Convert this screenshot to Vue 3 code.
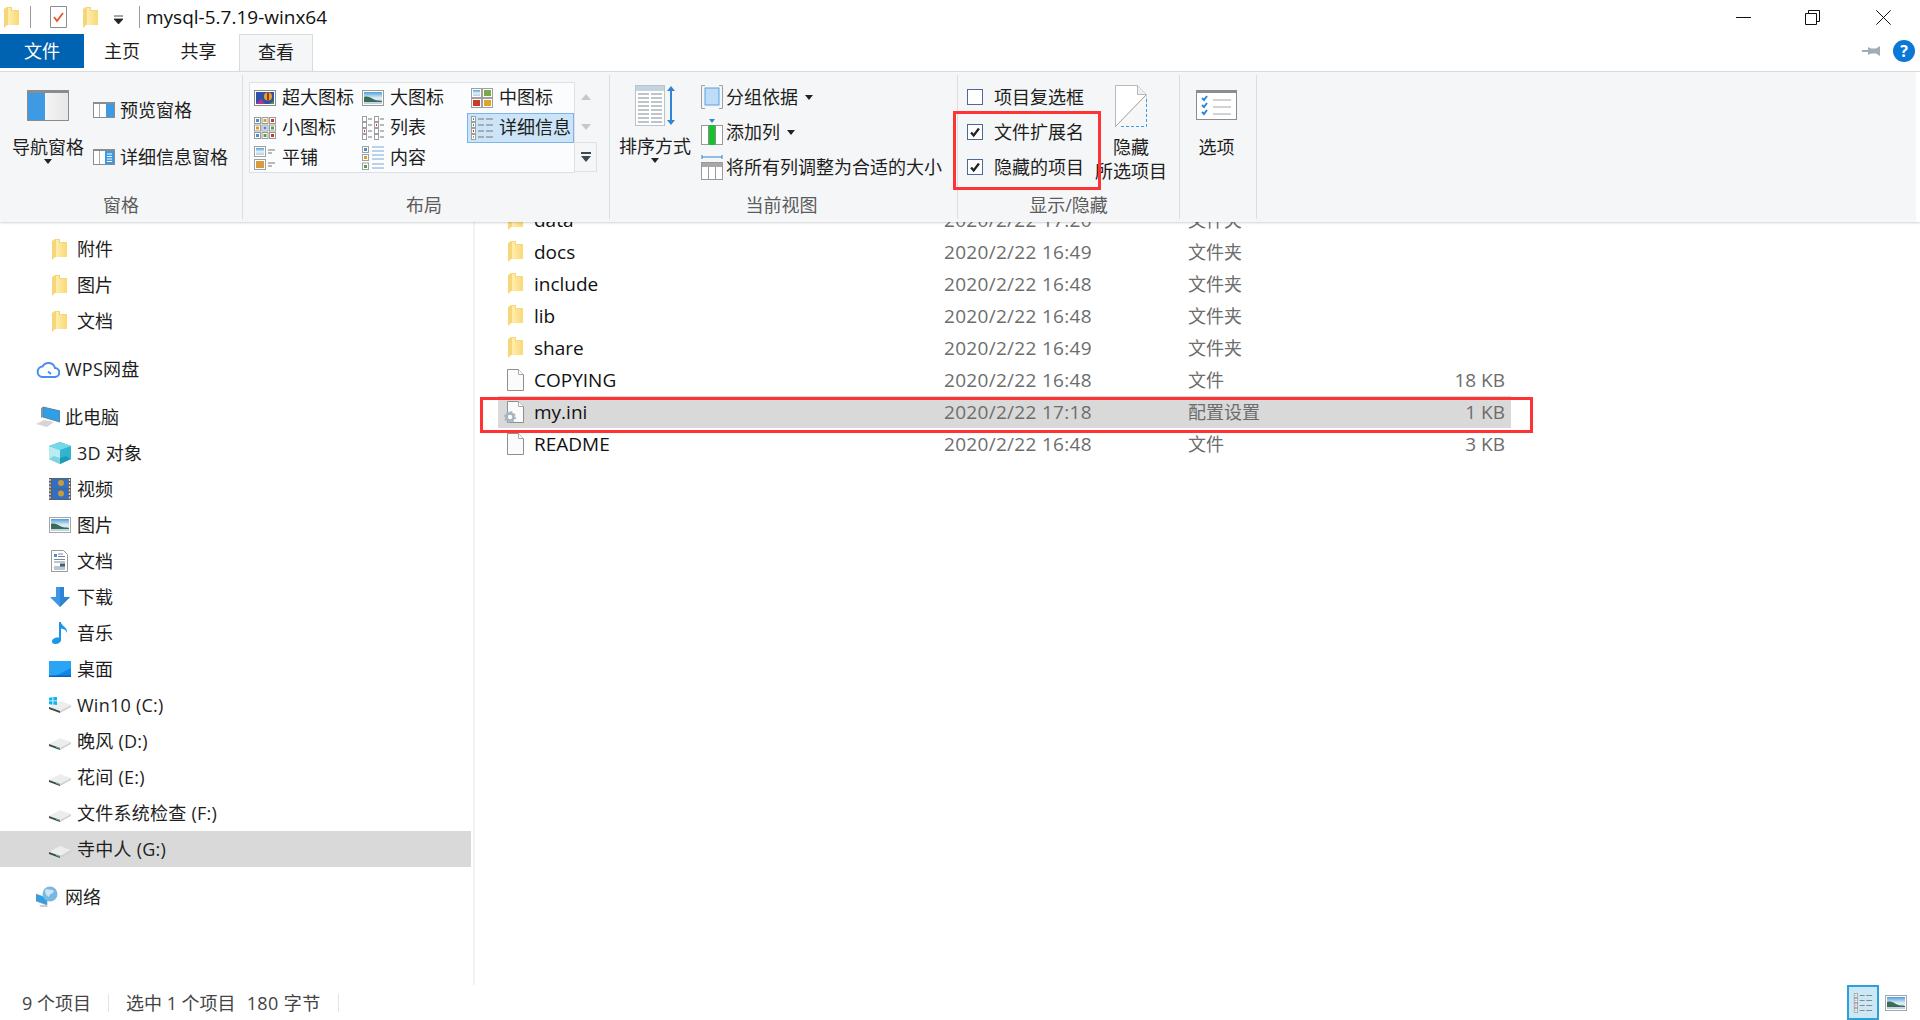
<script setup>
const nav = [
  { icon: 'folder', label: '附件', deep: true, cls: 'folder-ic' },
  { icon: 'folder', label: '图片', deep: true, cls: 'folder-ic' },
  { icon: 'folder', label: '文档', deep: true, cls: 'folder-ic' },
  { gap: true },
  { icon: 'cloud', label: 'WPS网盘', wide: true },
  { gap: true },
  { icon: 'pc', label: '此电脑' },
  { icon: 'cube', label: '3D 对象', deep: true, wide: true },
  { icon: 'film', label: '视频', deep: true },
  { icon: 'photo', label: '图片', deep: true },
  { icon: 'docs', label: '文档', deep: true },
  { icon: 'down', label: '下载', deep: true },
  { icon: 'note', label: '音乐', deep: true },
  { icon: 'desk', label: '桌面', deep: true },
  { icon: 'winDrive', label: 'Win10 (C:)', deep: true, wide: true },
  { icon: 'drive', label: '晚风 (D:)', deep: true, wide: true },
  { icon: 'drive', label: '花间 (E:)', deep: true, wide: true },
  { icon: 'drive', label: '文件系统检查 (F:)', deep: true, wide: true },
  { icon: 'drive', label: '寺中人 (G:)', deep: true, active: true, wide: true },
  { gap: true },
  { icon: 'net', label: '网络' }
]

const files = [
  { name: 'data', date: '2020/2/22 17:20', type: '文件夹', icon: 'folder' },
  { name: 'docs', date: '2020/2/22 16:49', type: '文件夹', icon: 'folder' },
  { name: 'include', date: '2020/2/22 16:48', type: '文件夹', icon: 'folder' },
  { name: 'lib', date: '2020/2/22 16:48', type: '文件夹', icon: 'folder' },
  { name: 'share', date: '2020/2/22 16:49', type: '文件夹', icon: 'folder' },
  { name: 'COPYING', date: '2020/2/22 16:48', type: '文件', size: '18 KB', icon: 'file' },
  { name: 'my.ini', date: '2020/2/22 17:18', type: '配置设置', size: '1 KB', icon: 'ini', active: true },
  { name: 'README', date: '2020/2/22 16:48', type: '文件', size: '3 KB', icon: 'file' }
]

const layouts = [
  { icon: 'gXl', label: '超大图标' },
  { icon: 'gLg', label: '大图标' },
  { icon: 'gMd', label: '中图标' },
  { icon: 'gSm', label: '小图标' },
  { icon: 'gList', label: '列表' },
  { icon: 'gDetail', label: '详细信息', active: true },
  { icon: 'gTile', label: '平铺' },
  { icon: 'gContent', label: '内容' }
]
</script>

<template>
  <div class="window">
    <!-- icon sheet -->
    <svg class="sheet" aria-hidden="true">
      <defs>
        <linearGradient id="sky" x1="0" y1="0" x2="0" y2="1">
          <stop offset="0" stop-color="#4f9fdc" />
          <stop offset="0.5" stop-color="#dfeef5" />
          <stop offset="1" stop-color="#b9d0dd" />
        </linearGradient>
        <linearGradient id="fold" x1="0" y1="0" x2="1" y2="0">
          <stop offset="0" stop-color="#fdeeb0" />
          <stop offset="1" stop-color="#fbd873" />
        </linearGradient>
        <linearGradient id="paneG" x1="0" y1="0" x2="1" y2="0">
          <stop offset="0" stop-color="#ffffff" />
          <stop offset="1" stop-color="#e6e6e6" />
        </linearGradient>
        <linearGradient id="deskG" x1="0" y1="0" x2="1" y2="1">
          <stop offset="0" stop-color="#1aa0f5" />
          <stop offset="1" stop-color="#0f7fe0" />
        </linearGradient>
      </defs>

      <symbol id="folder" viewBox="0 0 15 21">
        <path d="M0 2 3 0h5v3h7v15H3l-3 3z" fill="#f6d679" />
        <path d="M4 1h3v3h8v14H4z" fill="url(#fold)" />
      </symbol>
      <symbol id="file" viewBox="0 0 17 22">
        <path d="M.5.5h11l5 5v16H.5z" fill="#fbfbfb" stroke="#8e8e8e" />
        <path d="M11.5.5v5h5" fill="#fff" stroke="#a8a8a8" />
      </symbol>
      <symbol id="gear" viewBox="0 0 12 12">
        <circle cx="6" cy="6" r="3.6" fill="none" stroke="#a3b4c0" stroke-width="2.6" />
        <circle cx="6" cy="6" r="5.4" fill="none" stroke="#a3b4c0" stroke-width="1.3" stroke-dasharray="2 2.2" />
      </symbol>
      <symbol id="cloud" viewBox="0 0 24 18">
        <path d="M6 17h12.500a4.500 4.500 0 0 0 .5-9A6.800 6.800 0 0 0 6.500 6.500 5.300 5.300 0 0 0 6 17z" fill="none" stroke="#4a8df0" stroke-width="2" />
        <path d="M12 11.500 15 14" stroke="#4a8df0" stroke-width="2" />
      </symbol>
      <symbol id="pc" viewBox="0 0 24 22">
        <path d="M7 1 24 5v11L7 11z" fill="#2f9fe8" stroke="#5f7f96" />
        <path d="M5 2v10l2-1V1z" fill="#7a97ab" />
        <path d="M0 18l8-4 10 2-7 5z" fill="#d4d6d8" />
      </symbol>
      <symbol id="cube" viewBox="0 0 22 22">
        <path d="M11 0 22 4v13l-11 5L0 17V4z" fill="#31b5cf" />
        <path d="M0 4l11 4v14L0 17z" fill="#b9ecf2" />
        <path d="M11 0 22 4 11 8 0 4z" fill="#74d8e6" />
        <path d="M11 16v6L0 17l5-3z" fill="#7fd3df" />
        <path d="M11 16v6l11-5-5-3z" fill="#1e9ab5" />
      </symbol>
      <symbol id="film" viewBox="0 0 22 22">
        <rect width="22" height="22" fill="#5b5f66" />
        <rect x="3" y="1" width="16" height="9.500" fill="#2f70c4" />
        <rect x="3" y="11.500" width="16" height="9.500" fill="#2f70c4" />
        <circle cx="12" cy="5" r="3" fill="#c89a3a" />
        <circle cx="12" cy="15.500" r="3" fill="#c89a3a" />
        <path d="M1 1v20" stroke="#d8d8d8" stroke-width="1.400" stroke-dasharray="2 1.500" />
        <path d="M20.500 1v20" stroke="#d8d8d8" stroke-width="1.400" stroke-dasharray="2 1.500" />
      </symbol>
      <symbol id="photo" viewBox="0 0 22 16">
        <rect x=".5" y=".5" width="21" height="15" fill="#fff" stroke="#a6a6a6" />
        <rect x="2" y="2" width="18" height="12" fill="url(#sky)" />
        <path d="M2 7c3-1 6 0 9 2s6 1 9 2v1H2z" fill="#3c6a55" />
      </symbol>
      <symbol id="docs" viewBox="0 0 17 22">
        <path d="M.5.5h12l4 4v17H.5z" fill="#fff" stroke="#9a9a9a" />
        <path d="M3 4h3v3H3z" fill="#4a90d8" />
        <path d="M7 4h5M7 6.500h7M3 9.500h11M3 12h11M3 17h11M3 19h11" stroke="#7a8a98" />
        <rect x="9" y="13.500" width="5" height="3" fill="#3c5f7a" />
      </symbol>
      <symbol id="down" viewBox="0 0 20 20">
        <path d="M6 0h8v10h6l-10 10L0 10h6z" fill="#3d97e6" />
        <path d="M10 0h4v10h6L10 20z" fill="#2f83d3" />
      </symbol>
      <symbol id="note" viewBox="0 0 16 22">
        <path d="M7 0h2c0 4 7 5 6 11-1-3-3-4-6-4.500V18c0 2.500-3 4-6 4-2 0-3-1-3-2.500C0 17 3 15 7 15.500z" fill="#1c96e8" />
      </symbol>
      <symbol id="desk" viewBox="0 0 22 16">
        <rect width="22" height="16" fill="url(#deskG)" />
        <path d="M22 0v7L6 15H0V0z" fill="#2aa5f5" />
        <path d="M0 14.500h22V16H0z" fill="#0b5fb8" />
      </symbol>
      <symbol id="drive" viewBox="0 0 22 12">
        <path d="M0 6 11 0l11 4-11 6z" fill="#eceded" />
        <path d="M0 6l11 4v2L0 8z" fill="#3d4a45" />
        <path d="M11 10l11-6v2l-11 6z" fill="#cfd0d1" />
        <path d="M7 8.500l4 1.500v1l-4-1.500z" fill="#57c26a" />
      </symbol>
      <symbol id="winDrive" viewBox="0 0 22 16">
        <path d="M0 10 11 4l11 4-11 6z" fill="#eceded" />
        <path d="M0 10l11 4v2L0 12z" fill="#3d4a45" />
        <path d="M11 14l11-6v2l-11 6z" fill="#cfd0d1" />
        <path d="M0 .8 3.500.2v3.300H0zM4.300.1 8 0v3.500H4.300zM0 4.300h3.500v3.400L0 7.200zM4.300 4.300H8V8l-3.700-.4z" fill="#10b4ee" />
      </symbol>
      <symbol id="net" viewBox="0 0 22 22">
        <path d="M0 8l11 4v7L0 15z" fill="#2f9fe8" stroke="#7c93a5" stroke-width=".6" />
        <circle cx="14" cy="8" r="7.500" fill="#78b8e6" />
        <path d="M10 3c3 1 6 0 8 2-1 3-5 3-5 6-3-1-5-5-3-8z" fill="#cfe4f2" />
        <path d="M3 19l8 0 1 2H5z" fill="#c7cdd2" />
      </symbol>

      <symbol id="paneNav" viewBox="0 0 42 31">
        <rect x=".5" y=".5" width="41" height="30" fill="url(#paneG)" stroke="#8c8c8c" />
        <rect width="42" height="3" fill="#8c8c8c" />
        <rect x="1" y="3" width="17" height="27" fill="#3f9ae4" />
      </symbol>
      <symbol id="panePreview" viewBox="0 0 22 16">
        <rect x=".5" y=".5" width="21" height="15" fill="#fff" stroke="#8c8c8c" />
        <rect width="22" height="2" fill="#8c8c8c" />
        <rect x="13" y="2" width="8" height="13" fill="#3f9ae4" />
        <rect x="6" y="2" width="1" height="13" fill="#aaa" />
      </symbol>
      <symbol id="paneDetail" viewBox="0 0 22 16">
        <rect x=".5" y=".5" width="21" height="15" fill="#fff" stroke="#8c8c8c" />
        <rect width="22" height="2" fill="#8c8c8c" />
        <rect x="12" y="2" width="9" height="13" fill="#3f9ae4" />
        <path d="M14 5h5M14 7.500h5M14 10h5M14 12.500h5" stroke="#fff" />
        <rect x="6" y="2" width="1" height="13" fill="#aaa" />
      </symbol>

      <symbol id="gXl" viewBox="0 0 22 18">
        <rect x=".5" y="1.500" width="21" height="15" fill="#fff" stroke="#8c8c8c" />
        <rect x="2" y="3" width="18" height="12" fill="#2f52a8" />
        <path d="M2 15l5-5 4 5z" fill="#b8378e" />
        <circle cx="14" cy="7.500" r="4" fill="#e8a324" />
        <path d="M14 3.500v8" stroke="#a8341c" stroke-width="2" />
        <path d="M15 15l5-3v3z" fill="#4d9b3b" />
      </symbol>
      <symbol id="gLg" viewBox="0 0 22 18">
        <rect x=".5" y="1.500" width="21" height="15" fill="#fff" stroke="#9a9a9a" />
        <rect x="2" y="3" width="18" height="12" fill="url(#sky)" />
        <path d="M2 8c3-1 6 0 9 2s6 1 9 2v1H2z" fill="#3c6a55" />
      </symbol>
      <symbol id="gMd" viewBox="0 0 22 20">
        <rect x=".5" y=".5" width="10" height="9" fill="#fff" stroke="#a0a0a0" />
        <rect x="11.500" y=".5" width="10" height="9" fill="#fff" stroke="#a0a0a0" />
        <rect x=".5" y="10.500" width="10" height="9" fill="#fff" stroke="#a0a0a0" />
        <rect x="11.500" y="10.500" width="10" height="9" fill="#fff" stroke="#a0a0a0" />
        <rect x="2" y="2" width="7" height="6" fill="url(#sky)" />
        <rect x="13" y="2" width="7" height="6" fill="#7aa84a" />
        <rect x="2" y="12" width="7" height="6" fill="#c83a2a" />
        <rect x="13" y="12" width="7" height="6" fill="#dfa62a" />
      </symbol>
      <symbol id="gSm" viewBox="0 0 22 22">
        <g fill="#fff" stroke="#9a9a9a">
          <rect x=".5" y=".5" width="6" height="6" /><rect x="8" y=".5" width="6" height="6" /><rect x="15.500" y=".5" width="6" height="6" />
          <rect x=".5" y="8" width="6" height="6" /><rect x="8" y="8" width="6" height="6" /><rect x="15.500" y="8" width="6" height="6" />
          <rect x=".5" y="15.500" width="6" height="6" /><rect x="8" y="15.500" width="6" height="6" /><rect x="15.500" y="15.500" width="6" height="6" />
        </g>
        <path d="M2 2h3v3H2zM2 17h3v3H2zM9.500 9.500h3v3h-3z" fill="#4a90c8" />
        <path d="M9.500 2h3v3h-3zM2 9.500h3v3H2z" fill="#d8a02a" />
        <path d="M17 2h3v3h-3zM17 17h3v3h-3z" fill="#c83a2a" />
        <path d="M17 9.500h3v3h-3zM9.500 17h3v3h-3z" fill="#5d9c45" />
      </symbol>
      <symbol id="gList" viewBox="0 0 22 24">
        <g fill="#fff" stroke="#a0a0a0">
          <rect x=".5" y=".5" width="4" height="5" /><rect x=".5" y="6.500" width="4" height="5" /><rect x=".5" y="12.500" width="4" height="5" /><rect x=".5" y="18.500" width="4" height="5" />
          <rect x="12.500" y=".5" width="4" height="5" /><rect x="12.500" y="6.500" width="4" height="5" /><rect x="12.500" y="12.500" width="4" height="5" /><rect x="12.500" y="18.500" width="4" height="5" />
        </g>
        <path d="M6 3h4M6 9h4M6 15h4M6 21h4M18 3h4M18 9h4M18 15h4M18 21h4" stroke="#777" />
        <path d="M2 14h1v2H2zM14 8h1v2h-1z" fill="#c83a2a" />
      </symbol>
      <symbol id="gDetail" viewBox="0 0 22 24">
        <g fill="#fff" stroke="#a0a0a0">
          <rect x=".5" y=".5" width="4" height="5" /><rect x=".5" y="6.500" width="4" height="5" /><rect x=".5" y="12.500" width="4" height="5" /><rect x=".5" y="18.500" width="4" height="5" />
        </g>
        <path d="M7 3h6M15 3h7M7 9h6M15 9h7M7 15h6M15 15h7M7 21h6M15 21h7" stroke="#777" />
        <path d="M2 2h1v2H2z" fill="#4a90c8" /><path d="M2 8h1v2H2z" fill="#7a8a2a" /><path d="M2 14h1v2H2z" fill="#c83a2a" /><path d="M2 20h1v2H2z" fill="#8aa86a" />
      </symbol>
      <symbol id="gTile" viewBox="0 0 22 24">
        <rect x=".5" y=".5" width="11" height="10" fill="#fff" stroke="#a0a0a0" />
        <rect x=".5" y="13.500" width="11" height="10" fill="#fff" stroke="#a0a0a0" />
        <rect x="2" y="2" width="8" height="7" fill="url(#sky)" />
        <rect x="2" y="15" width="8" height="7" fill="#d89a3a" />
        <path d="M14 4h7M14 7h4M14 17h7M14 20h4" stroke="#777" />
      </symbol>
      <symbol id="gContent" viewBox="0 0 22 24">
        <rect x=".5" y=".5" width="6" height="6" fill="#fff" stroke="#a0a0a0" />
        <rect x=".5" y="8.500" width="6" height="6" fill="#fff" stroke="#a0a0a0" />
        <rect x=".5" y="17" width="6" height="6.500" fill="#fff" stroke="#a0a0a0" />
        <path d="M2 2h3v3H2z" fill="#4a90c8" /><path d="M2 10h3v3H2z" fill="#d8a02a" /><path d="M2 19h3v3H2z" fill="#5d9c45" />
        <path d="M10 1h12M10 5h12M10 9h12M10 13h12M10 18h12M10 22h12" stroke="#7aa6dc" />
      </symbol>

      <symbol id="sortBig" viewBox="0 0 40 41">
        <rect x=".5" y=".5" width="29" height="40" fill="#fff" stroke="#b8c4cc" />
        <rect x="1" y="1" width="28" height="5" fill="#c3d4df" />
        <path d="M3 9h11M16 9h11M3 13h11M16 13h11M3 17h11M16 17h11M3 21h11M16 21h11M3 25h11M16 25h11M3 29h11M16 29h11M3 33h11M16 33h11M3 37h11M16 37h11" stroke="#a9b2b8" stroke-width="1.600" />
        <path d="M36 1l4 5h-3v29h3l-4 5-4-5h3V6h-3z" fill="#2f86d2" />
      </symbol>
      <symbol id="groupBy" viewBox="0 0 22 24">
        <path d="M4 .5H.5v23H4M18 .5h3.500v23H18" fill="none" stroke="#9aa0a6" />
        <rect x="4" y="3" width="14" height="17" fill="#bcdcf7" stroke="#5ea3dc" />
      </symbol>
      <symbol id="addCol" viewBox="0 0 22 26">
        <path d="M8 0h6l-3 4z" fill="#2f86d2" />
        <rect x=".5" y="6.500" width="21" height="19" fill="#fff" stroke="#9a9a9a" />
        <rect x="8" y="6" width="6" height="20" fill="#17c32c" />
        <path d="M7.500 7v18M14.500 7v18" stroke="#8c8c8c" />
      </symbol>
      <symbol id="fitCol" viewBox="0 0 22 26">
        <path d="M1 3h20M1 1v4M21 1v4" stroke="#2f86d2" fill="none" />
        <rect x=".5" y="8.500" width="21" height="17" fill="#fff" stroke="#9a9a9a" />
        <rect x="1" y="9" width="20" height="4" fill="#a8a8a8" />
        <path d="M7.500 13v12M14.500 13v12" stroke="#9a9a9a" />
      </symbol>
      <symbol id="hideBig" viewBox="0 0 32 42">
        <path d="M.5 41.500V.5h22l9 9v10" fill="#fff" stroke="#b9b9b9" />
        <path d="M22.500.5v9h9" fill="#eee" stroke="#b9b9b9" />
        <path d="M.5 41.500 31.500 9.500v10L13 41.500z" fill="#f7f7f7" />
        <path d="M.5 41.500 31 10" stroke="#9c9c9c" fill="none" />
        <path d="M31.500 14v27.500H6" fill="none" stroke="#3f9ae4" stroke-dasharray="3 2" />
      </symbol>
      <symbol id="optBig" viewBox="0 0 41 30">
        <rect x=".5" y=".5" width="40" height="29" fill="#fff" stroke="#8c8c8c" />
        <rect width="41" height="3" fill="#8c8c8c" />
        <path d="M6 8l2 2 3-4M6 15l2 2 3-4M6 22l2 2 3-4" fill="none" stroke="#2f86d2" stroke-width="2" />
        <path d="M17 10h18M17 17h18M17 24h18" stroke="#c4c4c4" stroke-width="1.400" />
      </symbol>
      <symbol id="check" viewBox="0 0 16 16">
        <path d="M3.500 8.500 6.500 12 12.500 4" fill="none" stroke="#222" stroke-width="2.600" />
      </symbol>
    </svg>

    <!-- title bar -->
    <header class="title-bar">
      <svg class="t-folder"><use href="#folder" /></svg>
      <i class="t-sep sep-a"></i>
      <svg class="t-doc" viewBox="0 0 17 22">
        <path d="M.5.5h16v21H.5z" fill="#fff" stroke="#8e8e8e" />
        <path d="M4 11l3 4 6-8" fill="none" stroke="#e8562a" stroke-width="1.800" />
      </svg>
      <svg class="t-folder2"><use href="#folder" /></svg>
      <svg class="t-drop" viewBox="0 0 9 9"><path d="M0 1h9M0 4h9L4.500 9z" stroke="#222" fill="#222" stroke-width=".8" /></svg>
      <i class="t-sep sep-b"></i>
      <span class="t-name">mysql-5.7.19-winx64</span>
      <div class="win-btns">
        <svg class="wb" viewBox="0 0 15 15"><path d="M0 7.500h15" stroke="#111" /></svg>
        <svg class="wb wb-mid" viewBox="0 0 15 15"><path d="M3.500 3.500V.5h11v11h-3M.5 3.500h11v11H.5z" fill="none" stroke="#111" /></svg>
        <svg class="wb" viewBox="0 0 15 15"><path d="M.3.300l14.400 14.400M14.700.300.3 14.700" stroke="#111" /></svg>
      </div>
    </header>

    <!-- tabs -->
    <nav class="tabs">
      <span class="tab tab-file">文件</span>
      <span class="tab tab-home">主页</span>
      <span class="tab tab-share">共享</span>
      <span class="tab tab-view">查看</span>
      <div class="tabs-right">
        <svg class="pin" viewBox="0 0 18 12">
          <path d="M0 6h6" stroke="#a3abb3" stroke-width="2" />
          <path d="M6 2l3 1.500h5L18 1v10l-4-2.500H9L6 10z" fill="#a3abb3" />
        </svg>
        <span class="help">?</span>
      </div>
    </nav>

    <!-- ribbon -->
    <section class="ribbon">
      <div class="group g-pane">
        <div class="g-body">
          <div class="big big-pane">
            <svg class="i-pane"><use href="#paneNav" /></svg>
            <span class="big-text">导航窗格</span>
            <i class="caret"></i>
          </div>
          <div class="pane-rows">
            <div class="r-row"><svg class="i-small16"><use href="#panePreview" /></svg>预览窗格</div>
            <div class="r-row"><svg class="i-small16"><use href="#paneDetail" /></svg>详细信息窗格</div>
          </div>
        </div>
        <div class="g-label">窗格</div>
      </div>

      <div class="group g-layout">
        <div class="g-body">
          <div class="gallery">
            <div v-for="item in layouts" :key="item.label" class="g-item" :class="{ on: item.active }">
              <svg class="g-ic"><use :href="'#' + item.icon" /></svg>
              <span>{{ item.label }}</span>
            </div>
          </div>
          <div class="g-scroll">
            <span class="sb"><i class="tri up"></i></span>
            <span class="sb"><i class="tri dn"></i></span>
            <span class="sb more"><i class="bar"></i><i class="tri dn dark"></i></span>
          </div>
        </div>
        <div class="g-label">布局</div>
      </div>

      <div class="group g-view">
        <div class="g-body">
          <div class="big big-sort">
            <svg class="i-sort"><use href="#sortBig" /></svg>
            <span class="big-text sort-text">排序方式</span>
            <i class="caret"></i>
          </div>
          <div class="three-rows view-rows">
            <div class="r-row"><svg class="i-small"><use href="#groupBy" /></svg>分组依据<i class="caret inline"></i></div>
            <div class="r-row"><svg class="i-small"><use href="#addCol" /></svg>添加列<i class="caret inline"></i></div>
            <div class="r-row"><svg class="i-small"><use href="#fitCol" /></svg>将所有列调整为合适的大小</div>
          </div>
        </div>
        <div class="g-label">当前视图</div>
      </div>

      <div class="group g-show">
        <div class="g-body">
          <div class="three-rows checks">
            <label class="r-row"><span class="box"></span>项目复选框</label>
            <label class="r-row"><span class="box"><svg class="tick"><use href="#check" /></svg></span>文件扩展名</label>
            <label class="r-row"><span class="box"><svg class="tick"><use href="#check" /></svg></span>隐藏的项目</label>
          </div>
          <div class="big big-hide">
            <svg class="i-hide"><use href="#hideBig" /></svg>
            <span class="big-text hide-text">隐藏</span>
            <span class="big-text second">所选项目</span>
          </div>
        </div>
        <div class="g-label">显示/隐藏</div>
      </div>

      <div class="group g-opt">
        <div class="g-body">
          <div class="big big-opt">
            <svg class="i-opt"><use href="#optBig" /></svg>
            <span class="big-text opt-text">选项</span>
          </div>
        </div>
      </div>
    </section>

    <!-- main area -->
    <main class="body">
      <aside class="nav">
        <template v-for="(row, i) in nav" :key="i">
          <div v-if="row.gap" class="nav-gap"></div>
          <div v-else class="nav-row" :class="{ deep: row.deep, on: row.active }">
            <span class="nav-ic" :class="{ 'is-folder': row.cls }">
              <svg :class="'n-' + row.icon"><use :href="'#' + row.icon" /></svg>
            </span>
            <span class="nav-text" :class="{ wide: row.wide }">{{ row.label }}</span>
          </div>
        </template>
      </aside>
      <div class="split"></div>
      <div class="list">
        <div v-for="f in files" :key="f.name" class="file" :class="{ on: f.active }">
          <span class="f-ic">
            <svg v-if="f.icon === 'folder'" class="f-folder"><use href="#folder" /></svg>
            <svg v-else class="f-file"><use href="#file" /></svg>
            <svg v-if="f.icon === 'ini'" class="f-gear"><use href="#gear" /></svg>
          </span>
          <span class="f-name">{{ f.name }}</span>
          <span class="f-meta f-date">{{ f.date }}</span>
          <span class="f-meta">{{ f.type }}</span>
          <span class="f-meta f-size">{{ f.size }}</span>
        </div>
      </div>
    </main>

    <!-- status bar -->
    <footer class="status">
      <span class="st st-count">9 个项目</span>
      <i class="st-sep"></i>
      <span class="st st-sel">选中 1 个项目</span>
      <span class="st st-bytes">180 字节</span>
      <i class="st-sep"></i>
      <div class="st-views">
        <span class="vw on">
          <svg class="vw-d"><use href="#gDetail" /></svg>
        </span>
        <svg class="vw-p"><use href="#photo" /></svg>
      </div>
    </footer>

    <!-- red annotations drawn over the screenshot -->
    <div class="mark mark-checks"></div>
    <div class="mark mark-row"></div>
  </div>
</template>

<style>
html, body { margin: 0; background: #fff; }
</style>

<style scoped>
.window {
  position: relative;
  width: 1920px;
  height: 1020px;
  display: flex;
  flex-direction: column;
  overflow: hidden;
  background: #fff;
  color: #1e1e1e;
  font-family: "Open Sans", "Noto Sans CJK SC", sans-serif;
  font-size: 18px;
  line-height: 24px;
}
.sheet { position: absolute; width: 0; height: 0; }
svg { display: block; flex: none; }

/* title bar */
.title-bar { height: 34px; flex: none; display: flex; align-items: center; position: relative; }
.t-folder { width: 15px; height: 21px; margin-left: 4px; }
.t-sep { width: 1px; height: 22px; background: #9a9a9a; }
.sep-a { margin-left: 11px; }
.t-doc { width: 17px; height: 22px; margin-left: 19px; }
.t-folder2 { width: 15px; height: 21px; margin-left: 16px; }
.t-drop { width: 9px; height: 9px; margin-left: 16px; margin-top: 5px; }
.sep-b { margin-left: 16px; }
.t-name { margin-left: 6px; font-size: 19px; color: #111; }
.win-btns { margin-left: auto; display: flex; gap: 55px; padding-right: 29px; }
.wb { width: 15px; height: 15px; }
.wb-mid { margin: 0 1px 0 -1px; }

/* tabs */
.tabs { height: 37px; flex: none; display: flex; position: relative; }
.tab { display: flex; align-items: center; justify-content: center; height: 34px; }
.tab-file { width: 84px; background: #0063b1; color: #fff; }
.tab-home { width: 76px; }
.tab-share { width: 77px; margin-right: 2px; }
.tab-view {
  width: 74px;
  height: 37px;
  box-sizing: border-box;
  padding-bottom: 2px;
  background: #f5f6f7;
  border: 1px solid #dadbdc;
  border-bottom: 0;
}
.tabs-right { margin-left: auto; display: flex; align-items: center; gap: 13px; padding: 0 5px 3px 0; }
.pin { width: 18px; height: 12px; }
.help {
  width: 22px;
  height: 22px;
  border-radius: 50%;
  background: #0a78d7;
  color: #fff;
  font-size: 16px;
  font-weight: 700;
  line-height: 22px;
  text-align: center;
}

/* ribbon */
.ribbon {
  position: relative;
  z-index: 2;
  height: 151px;
  flex: none;
  box-sizing: border-box;
  display: flex;
  padding-top: 3px;
  background: linear-gradient(#dadbdc, #dadbdc) top / 100% 1px no-repeat,
    linear-gradient(#f5f6f7, #f5f6f7) left / 1916px 100% no-repeat;
  box-shadow: 0 1px 2px rgba(0, 0, 0, 0.18);
}
.group {
  box-sizing: border-box;
  height: 144px;
  margin-top: 1px;
  border-right: 1px solid #dcdddf;
  display: flex;
  flex-direction: column;
}
.g-body { height: 118px; flex: none; display: flex; }
.g-label { height: 25px; line-height: 25px; text-align: center; color: #5c5c5c; }
.g-pane { width: 243px; }
.g-layout { width: 367px; }
.g-layout .g-label, .g-view .g-label { padding-right: 4px; }
.g-view { width: 348px; }
.g-show { width: 222px; }
.g-opt { width: 77px; }

.big { display: flex; flex-direction: column; align-items: center; white-space: nowrap; }
.big-text { display: block; }
.caret {
  display: block;
  width: 0;
  height: 0;
  border: 4px solid transparent;
  border-top: 5px solid #222;
  border-bottom: 0;
}
.caret.inline { margin-left: 7px; }

.big-pane { width: 96px; padding-top: 15px; }
.i-pane { width: 42px; height: 31px; margin-bottom: 14px; }
.pane-rows { margin-left: -3px; padding-top: 23px; display: flex; flex-direction: column; gap: 23px; }
.r-row { display: flex; align-items: center; height: 24px; white-space: nowrap; }
.i-small16 { width: 22px; height: 16px; margin-right: 5px; }
.i-small { width: 22px; height: 26px; margin-right: 3px; }

/* layout gallery */
.g-layout .g-body { padding: 7px 0 0 6px; box-sizing: border-box; }
.gallery {
  width: 326px;
  height: 91px;
  box-sizing: border-box;
  background: #fbfcfd;
  border: 1px solid #dfe0e1;
  display: grid;
  grid-template-columns: 108px 109px 107px;
  grid-auto-rows: 30px;
}
.g-item { display: flex; align-items: center; gap: 6px; padding-left: 4px; box-sizing: border-box; white-space: nowrap; }
.g-item span { margin-top: -2px; }
.g-item.on { background: #cce4f7; box-shadow: inset 0 0 0 1px #7eb4ea; }
.g-ic { width: 22px; height: 24px; }
.g-scroll { width: 22px; height: 91px; display: flex; flex-direction: column; }
.sb { height: 30px; display: flex; flex-direction: column; align-items: center; justify-content: center; gap: 2px; box-sizing: border-box; }
.sb.more { border: 1px solid #dfe0e1; border-left: 0; }
.tri { width: 0; height: 0; border: 4px solid transparent; border-left-width: 5px; border-right-width: 5px; }
.tri.up { border-top: 0; border-bottom: 6px solid #c4c8cc; }
.tri.dn { border-bottom: 0; border-top: 6px solid #c4c8cc; }
.tri.dark { border-top-color: #3c4a56; }
.bar { width: 10px; height: 2px; background: #3c4a56; }

/* current view */
.big-sort { width: 90px; padding-top: 10px; }
.i-sort { width: 40px; height: 41px; }
.sort-text { margin-top: 8px; }
.three-rows { display: flex; flex-direction: column; gap: 11px; padding-top: 10px; }
.view-rows { margin-left: 1px; }

/* show / hide */
.checks { width: 129px; margin-left: 9px; box-sizing: border-box; }
.box {
  width: 16px;
  height: 16px;
  box-sizing: border-box;
  margin-right: 11px;
  background: #fff;
  border: 1px solid #4d6a91;
  display: flex;
  align-items: center;
  justify-content: center;
}
.tick { width: 14px; height: 14px; }
.big-hide { width: 70px; padding-top: 10px; }
.i-hide { width: 32px; height: 42px; }
.hide-text { margin-top: 8px; }

/* options */
.big-opt { width: 73px; padding-top: 15px; }
.i-opt { width: 41px; height: 30px; }
.opt-text { margin-top: 15px; }

/* main */
.body { flex: 1; min-height: 0; display: flex; overflow: hidden; }
.nav { width: 471px; flex: none; padding-top: 9px; box-sizing: border-box; }
.nav-row { height: 36px; display: flex; align-items: center; white-space: nowrap; padding-left: 36px; }
.nav-row.deep { padding-left: 49px; }
.nav-row.on { background: #d9d9d9; }
.nav-gap { height: 12px; }
.nav-text.wide { letter-spacing: 0.25px; }
.nav-ic { width: 28px; flex: none; display: flex; align-items: center; }
.nav-ic svg { width: 22px; height: 22px; }
.nav-ic.is-folder { padding-left: 3px; width: 25px; }
.nav-ic .n-folder { width: 15px; height: 21px; }
.nav-ic .n-cloud { width: 24px; height: 18px; }
.nav-ic .n-pc { width: 24px; height: 22px; }
.nav-ic .n-photo, .nav-ic .n-desk { height: 16px; }
.nav-ic .n-docs { width: 17px; margin-left: 2px; }
.nav-ic .n-down { width: 20px; height: 20px; margin-left: 1px; }
.nav-ic .n-note { width: 16px; margin-left: 3px; }
.nav-ic .n-drive { height: 12px; margin-top: 6px; }
.nav-ic .n-winDrive { height: 16px; }
.nav-row:not(.deep) .nav-ic { width: 29px; }

.split { width: 2px; margin-left: 2px; background: #f3f3f3; flex: none; }

.list { flex: 1; margin-top: -18px; padding-left: 23px; }
.file {
  width: 1013px;
  height: 32px;
  display: grid;
  grid-template-columns: 36px 410px 244px 1fr auto;
  align-items: center;
  white-space: nowrap;
}
.file.on { background: #d9d9d9; }
.f-ic { position: relative; height: 22px; }
.f-folder { width: 15px; height: 21px; margin-left: 10px; }
.f-file { width: 17px; height: 22px; margin-left: 9px; }
.f-gear { position: absolute; left: 6px; top: 10px; width: 12px; height: 12px; }
.f-name { color: #111; font-size: 19px; }
.f-meta { color: #6d6d6d; }
.f-date { font-size: 19px; letter-spacing: 0.3px; }
.f-size { text-align: right; padding-right: 6px; font-size: 19px; }

/* status */
.status { height: 35px; flex: none; display: flex; align-items: center; color: #444; }
.st-count { margin-left: 22px; }
.st-bytes { margin-left: 11px; letter-spacing: 0.4px; }
.st-sep { width: 1px; height: 18px; background: #e4e4e4; margin: 0 17px; }
.st-views { margin-left: auto; display: flex; align-items: center; gap: 6px; padding-right: 13px; }
.vw { width: 32px; height: 35px; box-sizing: border-box; display: flex; align-items: center; justify-content: center; }
.vw.on { background: #cce8f7; border: 2px solid #2ea0d8; }
.vw-d { width: 20px; height: 20px; }
.vw-p { width: 22px; height: 16px; }

/* annotations */
.mark { position: absolute; z-index: 5; box-sizing: border-box; border: 3px solid #ff3333; }
.mark-checks { left: 953px; top: 111px; width: 148px; height: 79px; }
.mark-row { left: 480px; top: 397px; width: 1053px; height: 36px; }
</style>
